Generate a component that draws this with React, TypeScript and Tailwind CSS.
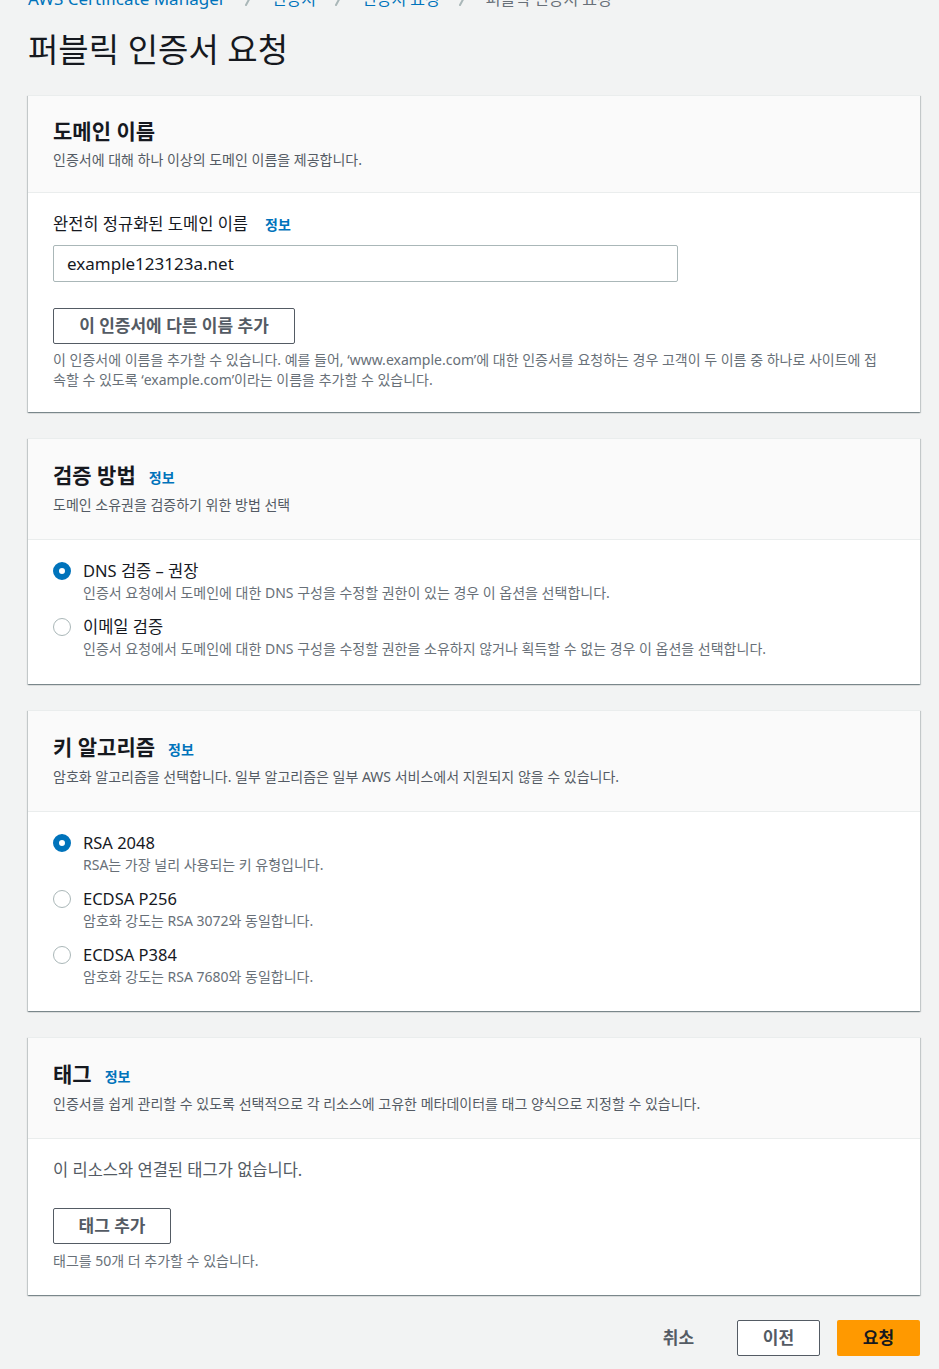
import type { ReactNode } from "react"

const font = "font-['Noto_Sans','Noto_Sans_CJK_KR',sans-serif]"
const cardShadow =
    "shadow-[0_1px_1px_0_rgba(0,28,36,0.3),1px_1px_1px_0_rgba(0,28,36,0.15),-1px_1px_1px_0_rgba(0,28,36,0.15)]"

function Chevron() {
    return (
        <svg width="12" height="16" viewBox="0 0 12 16" className="mx-[17px]">
            <path d="M3 14 L9 3" stroke="#aab7b8" strokeWidth="2" strokeLinecap="round" fill="none" />
        </svg>
    )
}

function Card(props: { title: string; info?: boolean; desc: string; children: ReactNode }) {
    return (
        <section className={`bg-white border-t border-[#eaeded] ${cardShadow}`}>
            <div
                className={`bg-[#fafafa] border-b border-[#eaeded] px-[25px] ${props.info ? "pt-[22px] pb-[24px]" : "pt-[23px] pb-[22px]"}`}
            >
                <div className="flex items-baseline">
                    <h2
                        className={`text-[21px] font-bold text-[#16191f] ${props.info ? "leading-[28px]" : "leading-[24px]"}`}
                    >
                        {props.title}
                    </h2>
                    {props.info && <span className="ml-[13px] text-[14px] font-bold text-[#0073bb]">정보</span>}
                </div>
                <p className={`${props.info ? "mt-[6px]" : "mt-[7px]"} text-[14px] leading-[20px] text-[#545b64]`}>
                    {props.desc}
                </p>
            </div>
            <div className="px-[25px] pt-[20px] pb-[22px]">{props.children}</div>
        </section>
    )
}

function Radio(props: { checked?: boolean; label: string; desc: string }) {
    return (
        <div className="flex">
            <div className="w-[30px] pt-[2px] shrink-0">
                {props.checked ? (
                    <div className="w-[18px] h-[18px] rounded-full border-[6px] border-[#0073bb] bg-white" />
                ) : (
                    <div className="w-[18px] h-[18px] rounded-full border-[1.5px] border-[#aab7b8] bg-white" />
                )}
            </div>
            <div>
                <div className="text-[16.5px] leading-[22px] text-[#16191f]">{props.label}</div>
                <div className="mt-[1px] text-[14px] leading-[20px] text-[#687078]">{props.desc}</div>
            </div>
        </div>
    )
}

function OutlineButton(props: { children: ReactNode; className?: string }) {
    return (
        <button
            className={`h-[36px] border border-[#545b64] rounded-[2px] bg-white text-[17px] font-bold text-[#545b64] ${props.className ?? ""}`}
        >
            {props.children}
        </button>
    )
}

export default function App() {
    return (
        <div className={`${font} bg-[#f2f3f3] min-h-[1369px] pl-[28px] pr-[19px] pb-[20px]`}>
            <nav className="-mt-[11px] flex items-center h-[20px] text-[16px] leading-[20px]">
                <span className="text-[17px] text-[#0073bb]">AWS Certificate Manager</span>
                <Chevron />
                <span className="text-[#0073bb]">인증서</span>
                <Chevron />
                <span className="text-[#0073bb]">인증서 요청</span>
                <Chevron />
                <span className="text-[#687078]">퍼블릭 인증서 요청</span>
            </nav>

            <h1 className="mt-[21px] text-[33px] leading-[40px] text-[#16191f]">퍼블릭 인증서 요청</h1>

            <div className="mt-[25px] flex flex-col gap-[26px]">
                <Card title="도메인 이름" desc="인증서에 대해 하나 이상의 도메인 이름을 제공합니다.">
                    <div className="flex items-baseline text-[16.5px] leading-[22px] text-[#16191f]">
                        완전히 정규화된 도메인 이름
                        <span className="ml-[17px] text-[14px] font-bold text-[#0073bb]">정보</span>
                    </div>
                    <div className="mt-[9px] w-[625px] h-[37px] border border-[#aab7b8] rounded-[2px] px-[13px] flex items-center text-[17px] text-[#16191f]">
                        example123123a.net
                    </div>
                    <OutlineButton className="mt-[26px] w-[242px]">이 인증서에 다른 이름 추가</OutlineButton>
                    <p className="mt-[6px] text-[14px] leading-[20px] text-[#687078]">
                        이 인증서에 이름을 추가할 수 있습니다. 예를 들어, ‘www.example.com’에 대한 인증서를 요청하는 경우 고객이 두 이름 중 하나로 사이트에 접
                        <br />
                        속할 수 있도록 ‘example.com’이라는 이름을 추가할 수 있습니다.
                    </p>
                </Card>

                <Card title="검증 방법" info desc="도메인 소유권을 검증하기 위한 방법 선택">
                    <div className="flex flex-col gap-[13px] pb-[3px]">
                        <Radio
                            checked
                            label="DNS 검증 – 권장"
                            desc="인증서 요청에서 도메인에 대한 DNS 구성을 수정할 권한이 있는 경우 이 옵션을 선택합니다."
                        />
                        <Radio
                            label="이메일 검증"
                            desc="인증서 요청에서 도메인에 대한 DNS 구성을 수정할 권한을 소유하지 않거나 획득할 수 없는 경우 이 옵션을 선택합니다."
                        />
                    </div>
                </Card>

                <Card
                    title="키 알고리즘"
                    info
                    desc="암호화 알고리즘을 선택합니다. 일부 알고리즘은 일부 AWS 서비스에서 지원되지 않을 수 있습니다."
                >
                    <div className="flex flex-col gap-[13px] pb-[2px]">
                        <Radio checked label="RSA 2048" desc="RSA는 가장 널리 사용되는 키 유형입니다." />
                        <Radio label="ECDSA P256" desc="암호화 강도는 RSA 3072와 동일합니다." />
                        <Radio label="ECDSA P384" desc="암호화 강도는 RSA 7680와 동일합니다." />
                    </div>
                </Card>

                <Card
                    title="태그"
                    info
                    desc="인증서를 쉽게 관리할 수 있도록 선택적으로 각 리소스에 고유한 메타데이터를 태그 양식으로 지정할 수 있습니다."
                >
                    <div className="pb-[2px]">
                        <p className="text-[16.5px] leading-[22px] text-[#545b64]">이 리소스와 연결된 태그가 없습니다.</p>
                        <OutlineButton className="mt-[27px] w-[118px]">태그 추가</OutlineButton>
                        <p className="mt-[7px] text-[14px] leading-[20px] text-[#687078]">태그를 50개 더 추가할 수 있습니다.</p>
                    </div>
                </Card>
            </div>

            <div className="mt-[25px] flex justify-end gap-[17px]">
                <button className="w-[83px] h-[36px] text-[17px] font-bold text-[#545b64]">취소</button>
                <OutlineButton className="w-[83px]">이전</OutlineButton>
                <button className="w-[83px] h-[36px] rounded-[2px] bg-[#ff9900] text-[17px] font-bold text-[#16191f]">
                    요청
                </button>
            </div>
        </div>
    )
}
